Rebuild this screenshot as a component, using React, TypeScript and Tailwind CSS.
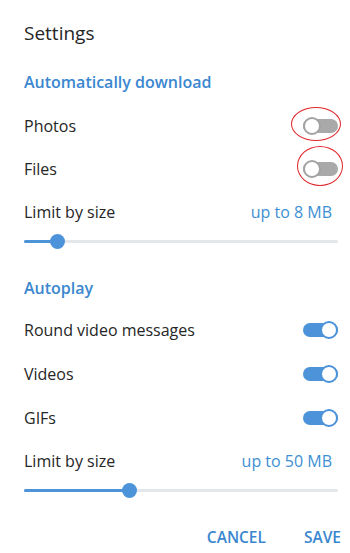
import React from 'react';

const Toggle: React.FC<{ on?: boolean }> = ({ on }) => {
  if (on) {
    return (
      <div className="relative w-[35px] h-[18px] flex items-center">
        <div className="w-full h-[14px] rounded-full bg-[#4d93d9]" />
        <div className="absolute right-0 top-0 w-[18px] h-[18px] rounded-full bg-white border-2 border-[#4d93d9]" />
      </div>
    );
  }
  return (
    <div className="relative w-[35px] h-[18px] flex items-center">
      <div className="w-full h-[14px] rounded-full bg-[#a9a9a9]" />
      <div className="absolute left-0 top-0 w-[18px] h-[18px] rounded-full bg-white border-2 border-[#a3a3a3]" />
    </div>
  );
};

const Slider: React.FC<{ value: number }> = ({ value }) => (
  <div className="relative h-[16px] flex items-center">
    <div className="w-full h-[3px] bg-[#e3e7eb] rounded-full" />
    <div className="absolute left-0 h-[3px] bg-[#4d93d9] rounded-full" style={{ width: value }} />
    <div
      className="absolute top-[0.5px] w-[15px] h-[15px] rounded-full bg-[#4d93d9]"
      style={{ left: value - 7.5 }}
    />
  </div>
);

const Row: React.FC<{ label: string; h?: string; children?: React.ReactNode }> = ({ label, h = 'h-[43px]', children }) => (
  <div className={`flex items-center justify-between ${h}`}>
    <span className="text-[16px] text-[#262626]">{label}</span>
    {children}
  </div>
);

export default function App() {
  return (
    <div className="w-[350px] h-[553px] bg-white pl-6 pr-3 pt-[21px] relative font-['Open_Sans',sans-serif]">
      <h1 className="text-[19px] leading-6 text-[#262626]">Settings</h1>

      <h2 className="mt-[25px] text-[16px] leading-6 font-semibold text-[#3a87cf]">Automatically download</h2>
      <div className="mt-[10px]">
        <Row label="Photos">
          <Toggle />
        </Row>
        <Row label="Files">
          <Toggle />
        </Row>
        <Row label="Limit by size">
          <span className="text-[16px] text-[#3d8fd3] mr-[6px]">up to 8 MB</span>
        </Row>
        <Slider value={33} />
      </div>

      <h2 className="mt-[27px] text-[16px] leading-6 font-semibold text-[#3a87cf]">Autoplay</h2>
      <div className="mt-[8px]">
        <Row label="Round video messages" h="h-[44px]">
          <Toggle on />
        </Row>
        <Row label="Videos" h="h-[44px]">
          <Toggle on />
        </Row>
        <Row label="GIFs" h="h-[44px]">
          <Toggle on />
        </Row>
        <Row label="Limit by size" h="h-[42px]">
          <span className="text-[16px] text-[#3d8fd3] mr-[6px]">up to 50 MB</span>
        </Row>
        <Slider value={105} />
      </div>

      <div className="mt-[27px] flex justify-end gap-[38px] -mr-[3px]">
        <button className="text-[15.5px] leading-6 font-semibold text-[#3a87cf]">CANCEL</button>
        <button className="text-[15.5px] leading-6 font-semibold text-[#3a87cf]">SAVE</button>
      </div>

      {/* annotation circles */}
      <div className="absolute left-[291px] top-[107px] w-[50px] h-[34px] rounded-[50%] border-[1.5px] border-[#e0262a]" />
      <div className="absolute left-[297px] top-[146px] w-[46px] h-[40px] rounded-[50%] border-[1.5px] border-[#e0262a]" />
    </div>
  );
}
